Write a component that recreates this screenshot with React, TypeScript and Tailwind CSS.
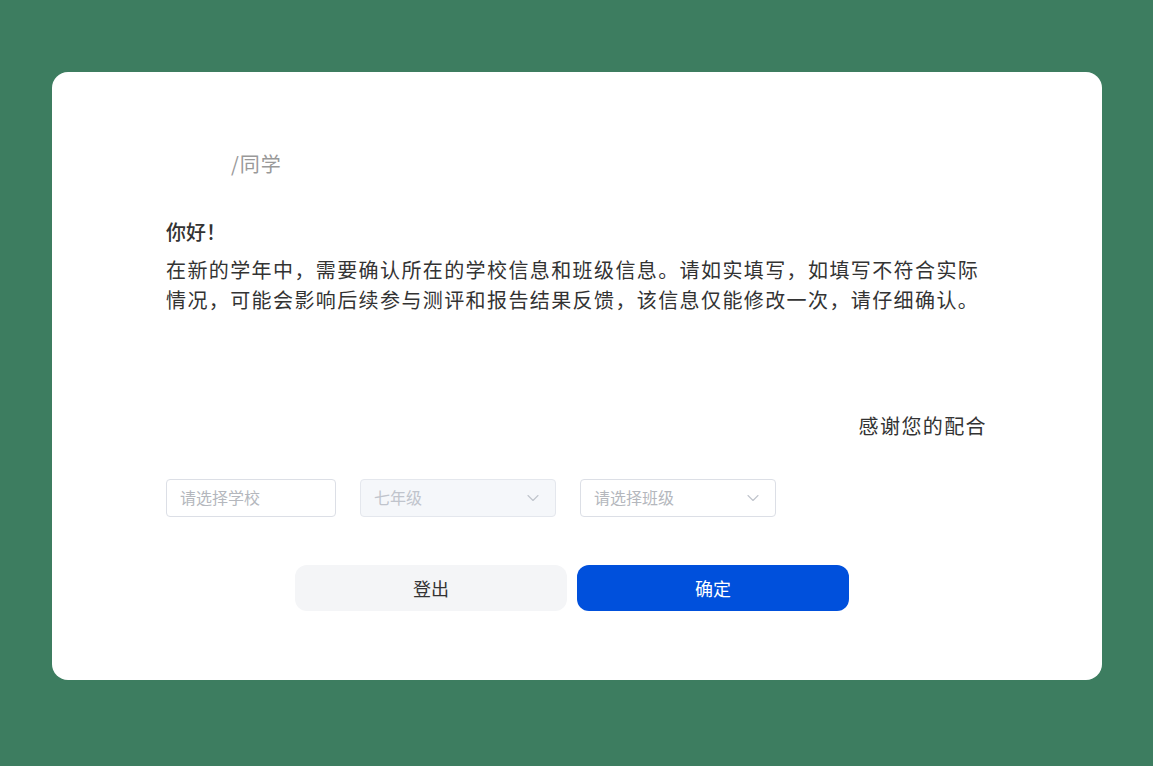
import React from "react";

const font = { fontFamily: '"Noto Sans CJK SC", "Noto Sans", sans-serif' };

const Chevron: React.FC = () => (
  <svg width="14" height="14" viewBox="0 0 14 14" fill="none" className="text-[#c0c4cc]">
    <path d="M2 4.5 L7 9.5 L12 4.5" stroke="currentColor" strokeWidth="1.1" strokeLinecap="round" strokeLinejoin="round" />
  </svg>
);

interface SelectBoxProps {
  placeholder: string;
  width: string;
  disabled?: boolean;
  arrow?: boolean;
}

const SelectBox: React.FC<SelectBoxProps> = ({ placeholder, width, disabled, arrow }) => (
  <div
    className={`${width} h-[38px] flex items-center justify-between pl-[13px] pr-[15px] rounded border ${
      disabled ? "bg-[#f5f7fa] border-[#e4e7ed]" : "bg-white border-[#dcdfe6]"
    }`}
  >
    <span className={`text-[16px] leading-[22px] pb-[2px] ${disabled ? "text-[#c0c4cc]" : "text-[#b4b7bd]"}`}>
      {placeholder}
    </span>
    {arrow && <Chevron />}
  </div>
);

export default function App() {
  return (
    <div className="min-h-screen bg-[#3d7d60] pt-[72px] pl-[52px]" style={font}>
      <div className="w-[1050px] h-[608px] bg-white rounded-[16px] pt-[78px] pl-[114px] pr-[115px]">
        <div className="h-[28px] leading-[28px] text-[20px] tracking-[1px] text-[#999] pl-[65px]">/同学</div>

        <div className="mt-[40px] h-[28px] leading-[28px] text-[20px] font-medium text-[#333]">你好！</div>

        <p className="mt-[9px] text-[20px] leading-[30px] tracking-[1.4px] text-[#333]">
          在新的学年中，需要确认所在的学校信息和班级信息。请如实填写，如填写不符合实际情况，可能会影响后续参与测评和报告结果反馈，该信息仅能修改一次，请仔细确认。
        </p>

        <div className="mt-[97px] h-[28px] leading-[28px] text-[20px] tracking-[1.4px] text-[#333] text-right">
          感谢您的配合
        </div>

        <div className="mt-[39px] flex items-center">
          <SelectBox placeholder="请选择学校" width="w-[170px]" />
          <div className="ml-[24px]">
            <SelectBox placeholder="七年级" width="w-[196px]" disabled arrow />
          </div>
          <div className="ml-[24px]">
            <SelectBox placeholder="请选择班级" width="w-[196px]" arrow />
          </div>
        </div>

        <div className="mt-[48px] flex justify-center gap-[10px] pr-[9px]">
          <button className="w-[272px] h-[46px] rounded-[12px] bg-[#f4f5f7] text-[18px] text-[#333]">登出</button>
          <button className="w-[272px] h-[46px] rounded-[12px] bg-[#0050dc] text-[18px] text-white">确定</button>
        </div>
      </div>
    </div>
  );
}
